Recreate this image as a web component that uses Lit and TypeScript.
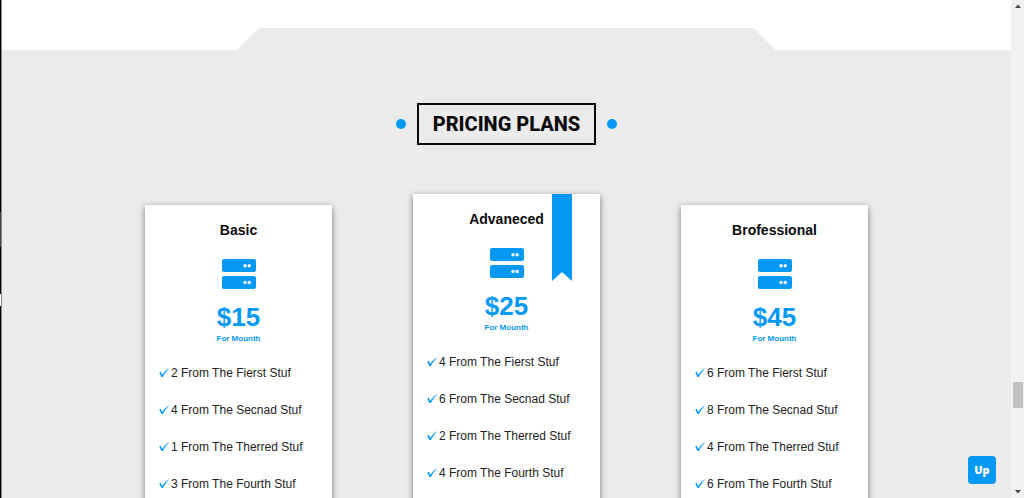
import { LitElement, html, css } from "lit";
import { customElement, property } from "lit/decorators.js";

interface Plan {
  name: string;
  price: string;
  features: string[];
  featured?: boolean;
}

const plans: Plan[] = [
  {
    name: "Basic",
    price: "$15",
    features: ["2 From The Fierst Stuf", "4 From The Secnad Stuf", "1 From The Therred Stuf", "3 From The Fourth Stuf"],
  },
  {
    name: "Advaneced",
    price: "$25",
    features: ["4 From The Fierst Stuf", "6 From The Secnad Stuf", "2 From The Therred Stuf", "4 From The Fourth Stuf"],
    featured: true,
  },
  {
    name: "Brofessional",
    price: "$45",
    features: ["6 From The Fierst Stuf", "8 From The Secnad Stuf", "4 From The Therred Stuf", "6 From The Fourth Stuf"],
  },
];

@customElement("plan-card")
export class PlanCard extends LitElement {
  @property({ attribute: false }) plan!: Plan;

  static styles = css`
    :host {
      display: block;
    }
    .card {
      position: relative;
      box-sizing: border-box;
      padding: 16px 14px 40px;
      background: #fff;
      box-shadow: 0 2px 6px rgba(0, 0, 0, 0.5);
      text-align: center;
    }
    .name {
      margin: 0 0 20px;
      font-size: 14px;
      line-height: 18px;
      color: #0a0a0a;
    }
    .icon {
      display: block;
      width: 34px;
      height: 30px;
      margin: 0 auto 12px;
    }
    .price {
      margin: 0;
      font-size: 26px;
      line-height: 32px;
      font-weight: 700;
      color: #0598f5;
    }
    .period {
      margin: 0 0 20px;
      font-size: 8px;
      line-height: 12px;
      font-weight: 700;
      color: #0598f5;
    }
    .features {
      display: grid;
      gap: 21px;
      margin: 0;
      padding: 0;
      list-style: none;
    }
    .feature {
      display: flex;
      align-items: center;
      gap: 1px;
      font-size: 12px;
      line-height: 16px;
      color: #222;
      text-align: left;
      white-space: nowrap;
    }
    .tick {
      flex: none;
      width: 11px;
      height: 12px;
    }
    .ribbon {
      position: absolute;
      top: 0;
      right: 28px;
      width: 20px;
      height: 87px;
      background: #0598f5;
      clip-path: polygon(0 0, 100% 0, 100% 100%, 50% 78px, 0 100%);
    }
  `;

  render() {
    const { name, price, features, featured } = this.plan;
    return html`
      <article class="card">
        ${featured ? html`<span class="ribbon"></span>` : null}
        <h3 class="name">${name}</h3>
        <svg class="icon" viewBox="0 0 34 30" aria-hidden="true">
          <rect width="34" height="13" rx="2" fill="#0598f5" />
          <rect y="17" width="34" height="13" rx="2" fill="#0598f5" />
          <g fill="#fff">
            <circle cx="23" cy="6.7" r="1.7" />
            <circle cx="27.2" cy="6.7" r="1.7" />
            <circle cx="23" cy="23.5" r="1.7" />
            <circle cx="27.2" cy="23.5" r="1.7" />
          </g>
        </svg>
        <p class="price">${price}</p>
        <p class="period">For Mounth</p>
        <ul class="features">
          ${features.map(
            (text) => html`
              <li class="feature">
                <svg class="tick" viewBox="0 0 11 12" aria-hidden="true">
                  <path d="M0.2 5.5 L1.8 4.8 L3.2 8 C5 5 7.6 2.3 10.7 0.9 C7.8 3.4 5.6 6.4 3.9 10 L2.5 10 Z" fill="#0598f5" />
                </svg>
                <span>${text}</span>
              </li>
            `
          )}
        </ul>
      </article>
    `;
  }
}

@customElement("app-root")
export class AppRoot extends LitElement {
  static styles = css`
    :host {
      display: flex;
      height: 100vh;
      overflow: hidden;
      background: #ebebeb;
      font-family: "Liberation Sans", Arial, sans-serif;
    }
    .edge {
      flex: none;
      box-sizing: border-box;
      width: 2px;
      border-right: 1px solid #8a8a8a;
      background: linear-gradient(#000 212px, #444 212px, #444 247px, #000 247px, #000 294px, #fff 294px, #fff 306px, #000 306px);
    }
    .page {
      position: relative;
      flex: 1;
      min-width: 0;
      overflow: hidden;
    }
    .top {
      padding-top: 28px;
      background: #fff;
    }
    .notch {
      width: 53.4%;
      height: 22px;
      margin: 0 auto;
      background: #ebebeb;
      clip-path: polygon(22px 0, calc(100% - 22px) 0, 100% 100%, 0 100%);
    }
    .pricing {
      padding: 53px 20px 0;
    }
    .heading {
      display: flex;
      justify-content: center;
      align-items: center;
      gap: 11px;
      margin-bottom: 49px;
    }
    .dot {
      width: 10px;
      height: 10px;
      border-radius: 50%;
      background: #0598f5;
    }
    .title {
      margin: 0;
      padding: 6px 14px;
      border: 2px solid #0a0a0a;
      font-family: Roboto, sans-serif;
      font-size: 20px;
      line-height: 26px;
      font-weight: 800;
      color: #0a0a0a;
      text-transform: uppercase;
    }
    .plans {
      display: grid;
      grid-template-columns: repeat(3, minmax(0, 187px));
      justify-content: center;
      align-items: start;
      gap: 81px;
    }
    .plan {
      margin-top: 11px;
    }
    .featured {
      margin-top: 0;
    }
    .up {
      position: absolute;
      right: 15px;
      bottom: 14px;
      width: 28px;
      height: 28px;
      padding: 0;
      border: 0;
      border-radius: 4px;
      background: #0598f5;
      color: #fff;
      font: 800 11px/28px "Open Sans", sans-serif;
      cursor: pointer;
    }
    .scrollbar {
      display: flex;
      flex: none;
      flex-direction: column;
      align-items: center;
      box-sizing: border-box;
      width: 13px;
      padding: 4px 0;
      background: #f1f1f1;
    }
    .arrow {
      flex: none;
      width: 6px;
      height: 4px;
    }
    .before {
      flex: 374;
    }
    .thumb {
      flex: none;
      width: 10px;
      height: 26px;
      background: #c1c1c1;
    }
    .after {
      flex: 82;
    }
  `;

  render() {
    return html`
      <div class="edge"></div>
      <main class="page">
        <div class="top"><div class="notch"></div></div>
        <section class="pricing">
          <header class="heading">
            <span class="dot"></span>
            <h2 class="title">Pricing Plans</h2>
            <span class="dot"></span>
          </header>
          <div class="plans">
            ${plans.map((plan) => html`<plan-card class="plan ${plan.featured ? "featured" : ""}" .plan=${plan}></plan-card>`)}
          </div>
        </section>
        <button class="up" type="button">Up</button>
      </main>
      <div class="scrollbar" aria-hidden="true">
        <svg class="arrow" viewBox="0 0 6 4"><path d="M0 4 L3 0.5 L6 4 Z" fill="#444" /></svg>
        <div class="before"></div>
        <div class="thumb"></div>
        <div class="after"></div>
        <svg class="arrow" viewBox="0 0 6 4"><path d="M0 0 L3 3.5 L6 0 Z" fill="#444" /></svg>
      </div>
    `;
  }
}
